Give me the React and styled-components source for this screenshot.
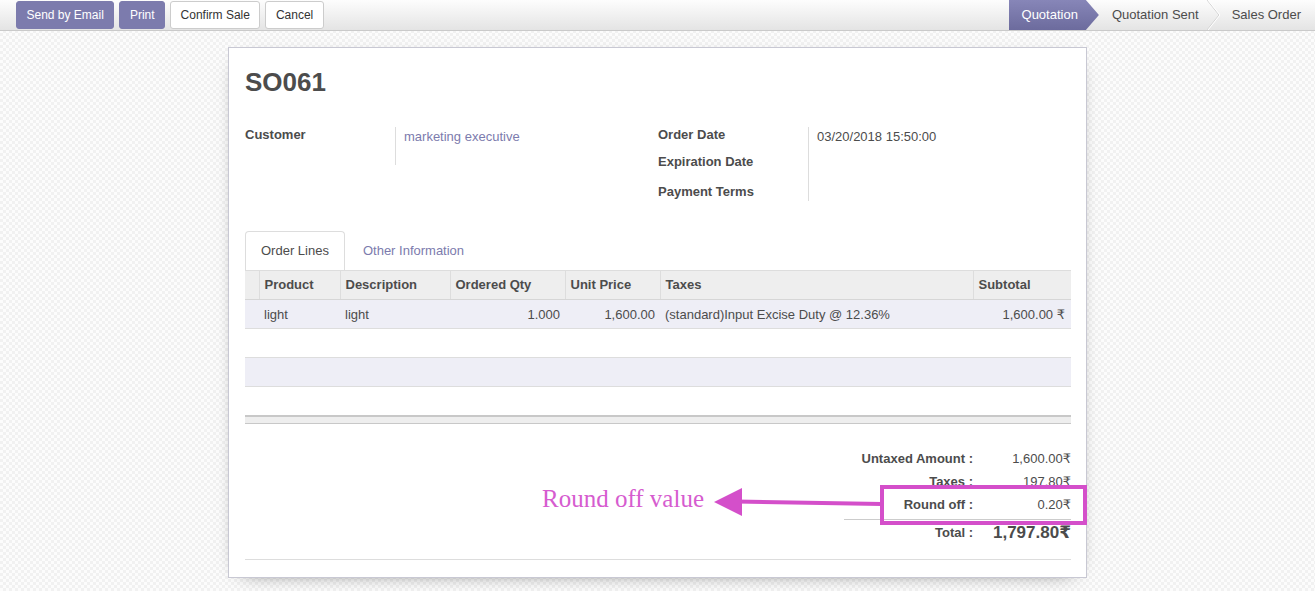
import React from "react";
import styled, { createGlobalStyle } from "styled-components";

const GlobalStyle = createGlobalStyle`
  body {
    margin: 0;
    font-family: "Liberation Sans", "DejaVu Sans", Arial, sans-serif;
    font-size: 13px;
    color: #4c4c4c;
  }
`;

const lines = [
  { product: "light", description: "light", qty: "1.000", price: "1,600.00", taxes: "(standard)Input Excise Duty @ 12.36%", subtotal: "1,600.00 ₹" },
];

const App = () => {
  return (
    <Page>
      <GlobalStyle />
      <StatusBar>
        <Buttons>
          <Button $primary>Send by Email</Button>
          <Button $primary>Print</Button>
          <Button>Confirm Sale</Button>
          <Button>Cancel</Button>
        </Buttons>
        <Steps>
          <ActiveStep>Quotation</ActiveStep>
          <Step $left={13} $right={8}>Quotation Sent</Step>
          <Chevron width="13" height="30" viewBox="0 0 13 30">
            <polyline points="0,0 12,15 0,30" fill="none" stroke="#d2d2d2" strokeWidth="1" />
            <polyline points="1,0 13,15 1,30" fill="none" stroke="#ffffff" strokeWidth="1" />
          </Chevron>
          <Step $left={12} $right={14}>Sales Order</Step>
        </Steps>
      </StatusBar>

      <SheetArea>
        <Sheet>
          <Title>SO061</Title>

          <Groups>
            <Group>
              <Labels>
                <Label $h={38}>Customer</Label>
              </Labels>
              <Values $h={38}>
                <Link>marketing executive</Link>
              </Values>
            </Group>
            <Group>
              <Labels>
                <Label $h={27}>Order Date</Label>
                <Label $h={30}>Expiration Date</Label>
                <Label $h={19}>Payment Terms</Label>
              </Labels>
              <Values $h={74}>
                <Value>03/20/2018 15:50:00</Value>
              </Values>
            </Group>
          </Groups>

          <Tabs>
            <Tab $active>Order Lines</Tab>
            <Tab>Other Information</Tab>
          </Tabs>

          <Table>
            <colgroup>
              <col style={{ width: 14 }} />
              <col style={{ width: 81 }} />
              <col style={{ width: 110 }} />
              <col style={{ width: 115 }} />
              <col style={{ width: 95 }} />
              <col style={{ width: 313 }} />
              <col style={{ width: 98 }} />
            </colgroup>
            <thead>
              <tr>
                <Th />
                <Th>Product</Th>
                <Th>Description</Th>
                <Th>Ordered Qty</Th>
                <Th>Unit Price</Th>
                <Th>Taxes</Th>
                <Th>Subtotal</Th>
              </tr>
            </thead>
            <tbody>
              {lines.map((l, i) => (
                <Tr key={i} $odd>
                  <Td />
                  <Td>{l.product}</Td>
                  <Td>{l.description}</Td>
                  <Td $num>{l.qty}</Td>
                  <Td $num>{l.price}</Td>
                  <Td>{l.taxes}</Td>
                  <Td $num $pr={6}>{l.subtotal}</Td>
                </Tr>
              ))}
              <Tr><Td colSpan={7} /></Tr>
              <Tr $odd><Td colSpan={7} /></Tr>
              <Tr><Td colSpan={7} /></Tr>
            </tbody>
            <tfoot>
              <tr><FootCell colSpan={7} /></tr>
            </tfoot>
          </Table>

          <TotalsWrap>
            <Totals>
              <TotalLabel>Untaxed Amount :</TotalLabel>
              <TotalValue>1,600.00₹</TotalValue>
              <TotalLabel>Taxes :</TotalLabel>
              <TotalValue>197.80₹</TotalValue>
              <TotalLabel>Round off :</TotalLabel>
              <TotalValue>0.20₹</TotalValue>
              <GrandLabel>Total :</GrandLabel>
              <GrandValue>1,797.80₹</GrandValue>
            </Totals>
          </TotalsWrap>

          <Divider />
        </Sheet>
      </SheetArea>

      <Note>Round off value</Note>
      <Arrow width="170" height="32" viewBox="0 0 170 32">
        <polygon points="22,13.5 168,16 168,20 22,17.5" fill="#d44fca" />
        <polygon points="0,16 28,2 28,30" fill="#d44fca" />
      </Arrow>
      <Highlight />
    </Page>
  );
};

export default App;

const Page = styled.div`
  position: relative;
  min-height: 591px;
  background: repeating-conic-gradient(#f1f1f1 0% 25%, #fcfcfc 0% 50%) 0 0 / 6px 6px;
`;

const StatusBar = styled.div`
  height: 30px;
  display: flex;
  justify-content: space-between;
  background: linear-gradient(#fdfdfd, #e4e4e4);
  border-bottom: 1px solid #cacaca;
`;

const Buttons = styled.div`
  display: flex;
  align-items: flex-start;
  gap: 5px;
  padding: 1px 0 0 16px;
`;

const Button = styled.button`
  height: 28px;
  padding: 0 9.5px;
  font-family: "Liberation Sans", Arial, sans-serif;
  font-size: 12px;
  border-radius: 3px;
  border: 1px solid ${(p) => (p.$primary ? "#7c7bad" : "#cccccc")};
  background: ${(p) => (p.$primary ? "#7c7bad" : "#ffffff")};
  color: ${(p) => (p.$primary ? "#ffffff" : "#333333")};
`;

const Steps = styled.div`
  display: flex;
  align-items: stretch;
  line-height: 28px;
`;

const ActiveStep = styled.div`
  display: flex;
  align-items: center;
  padding: 0 21px 0 13px;
  color: #ffffff;
  background: linear-gradient(#8786b8, #6c6b9d);
  clip-path: polygon(0 0, calc(100% - 13px) 0, 100% 50%, calc(100% - 13px) 100%, 0 100%);
`;

const Step = styled.div`
  display: flex;
  align-items: center;
  padding: 0 ${(p) => p.$right}px 0 ${(p) => p.$left}px;
  color: #4c4c4c;
`;

const Chevron = styled.svg`
  display: block;
  flex-shrink: 0;
`;

const SheetArea = styled.div`
  padding: 16px 0 14px;
`;

const Sheet = styled.div`
  box-sizing: border-box;
  width: 859px;
  margin: 0 auto;
  padding: 0 15px 17px 16px;
  background: #ffffff;
  border: 1px solid #c8c8d3;
  box-shadow: 0 5px 20px -15px #000000;
`;

const Title = styled.h1`
  margin: 19px 0 0;
  font-size: 26px;
  line-height: 31px;
  font-weight: bold;
  color: #4c4c4c;
`;

const Groups = styled.div`
  display: grid;
  grid-template-columns: 1fr 1fr;
  margin-top: 28px;
`;

const Group = styled.div`
  display: grid;
  grid-template-columns: 150px 1fr;
  align-items: start;
`;

const Labels = styled.div`
  display: flex;
  flex-direction: column;
`;

const Label = styled.div`
  height: ${(p) => p.$h}px;
  line-height: 18px;
  font-weight: bold;
`;

const Values = styled.div`
  height: ${(p) => p.$h}px;
  margin-top: 1px;
  padding-left: 8px;
  border-left: 1px solid #dddddd;
  line-height: 20px;
`;

const Link = styled.span`
  color: #7c7bad;
`;

const Value = styled.span`
  color: #4c4c4c;
`;

const Tabs = styled.div`
  display: flex;
  gap: 2px;
  margin-top: 29px;
`;

const Tab = styled.div`
  box-sizing: border-box;
  height: 39px;
  line-height: 37px;
  padding: 0 15px;
  border: 1px solid ${(p) => (p.$active ? "#dddddd" : "transparent")};
  border-bottom: none;
  border-radius: 4px 4px 0 0;
  color: ${(p) => (p.$active ? "#4c4c4c" : "#7c7bad")};
`;

const Table = styled.table`
  width: 100%;
  border-collapse: collapse;
  table-layout: fixed;
`;

const Th = styled.th`
  height: 26px;
  padding: 0 5px 2px;
  text-align: left;
  font-weight: bold;
  background: #eeeeee;
  border-top: 1px solid #dddddd;
  border-bottom: 1px solid #d6d6d6;
  & + & {
    border-left: 1px solid #dddddd;
  }
`;

const Tr = styled.tr`
  background: ${(p) => (p.$odd ? "#eeeef6" : "#ffffff")};
  border-bottom: 1px solid #dddddd;
`;

const Td = styled.td`
  height: 28px;
  padding: 0 ${(p) => p.$pr ?? 5}px 0 5px;
  text-align: ${(p) => (p.$num ? "right" : "left")};
  white-space: nowrap;
`;

const FootCell = styled.td`
  height: 6px;
  padding: 0;
  background: #eeeeee;
  border-top: 2px solid #c8c8c8;
  border-bottom: 1px solid #c8c8c8;
`;

const TotalsWrap = styled.div`
  display: flex;
  justify-content: flex-end;
  margin-top: 23px;
`;

const Totals = styled.div`
  display: grid;
  grid-template-columns: 136px 91px;
  grid-auto-rows: 23px;
  line-height: 23px;
`;

const TotalLabel = styled.div`
  padding-right: 7px;
  text-align: right;
  font-weight: bold;
`;

const TotalValue = styled.div`
  text-align: right;
`;

const GrandLabel = styled(TotalLabel)`
  margin-top: 3px;
  padding-top: 1px;
  border-top: 1px solid #cccccc;
  height: 24px;
  line-height: 24px;
`;

const GrandValue = styled.div`
  margin-top: 3px;
  padding-top: 1px;
  border-top: 1px solid #cccccc;
  height: 24px;
  line-height: 24px;
  text-align: right;
  font-size: 17px;
  font-weight: bold;
`;

const Divider = styled.div`
  margin-top: 20px;
  border-top: 1px solid #dddddd;
`;

const Note = styled.div`
  position: absolute;
  left: 542px;
  top: 484px;
  font-family: "Liberation Serif", "DejaVu Serif", serif;
  font-size: 25px;
  line-height: 30px;
  color: #d65ccf;
`;

const Arrow = styled.svg`
  position: absolute;
  left: 714px;
  top: 486px;
`;

const Highlight = styled.div`
  position: absolute;
  left: 880px;
  top: 485px;
  width: 207px;
  height: 40px;
  box-sizing: border-box;
  border: 4px solid #d44fca;
`;
